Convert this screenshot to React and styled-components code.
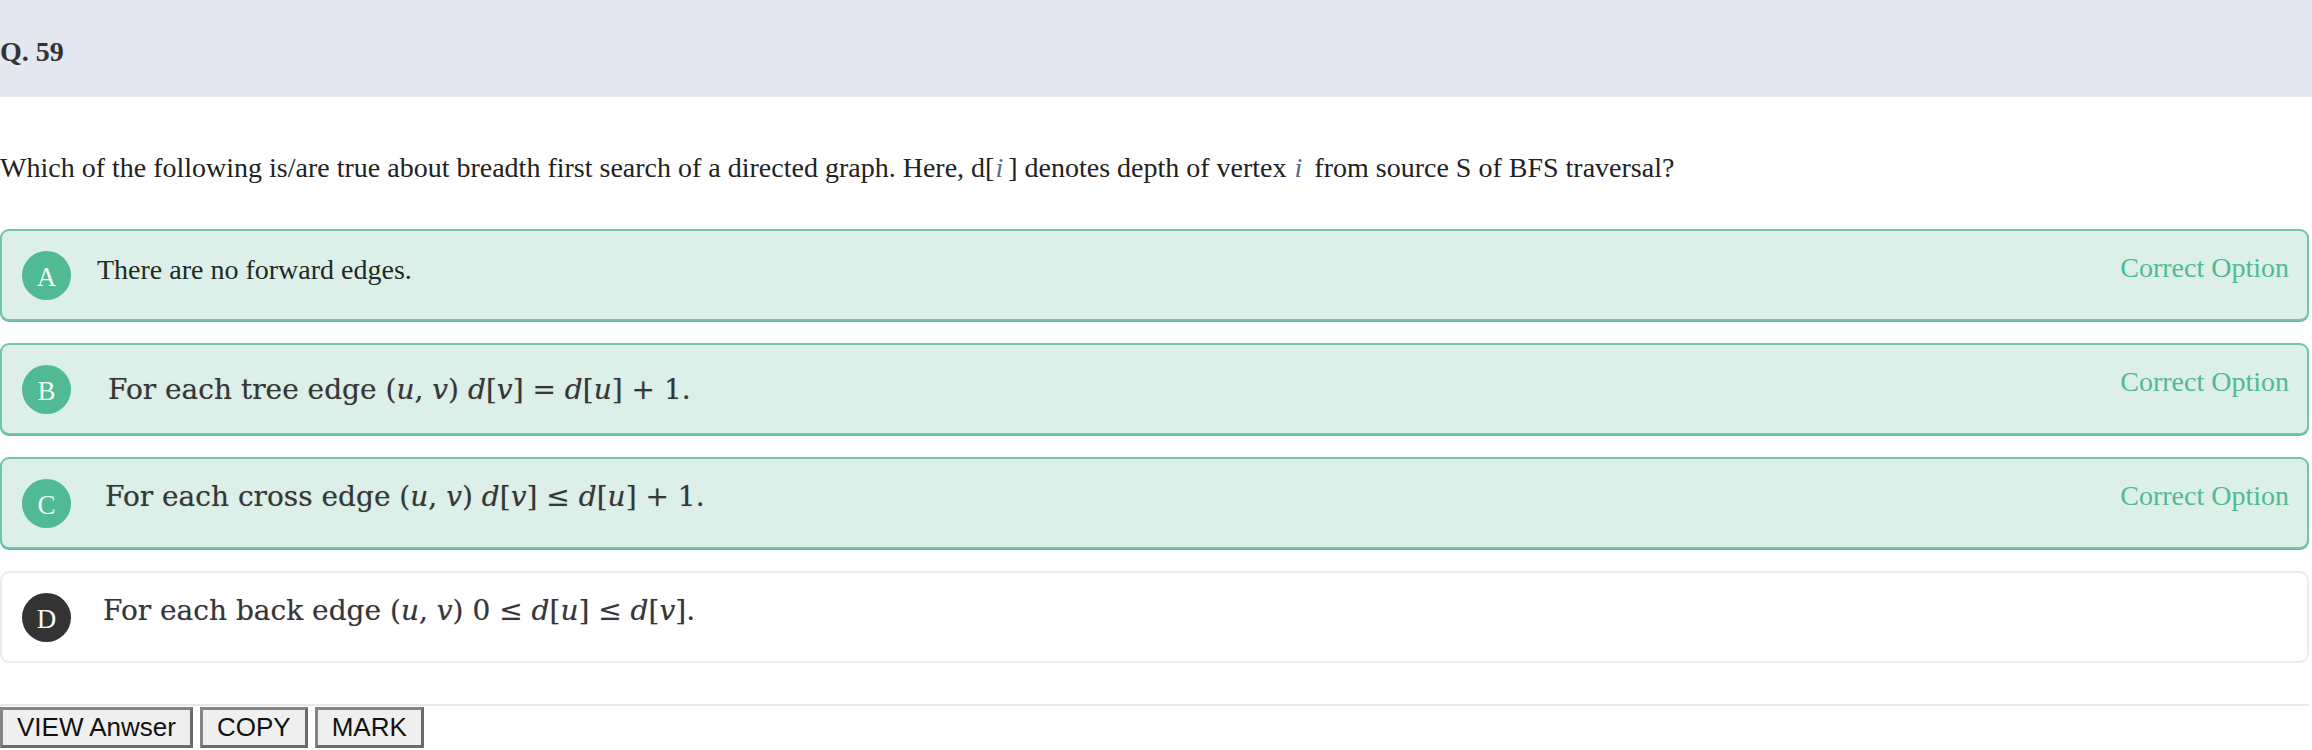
import styled, { createGlobalStyle } from "styled-components";

const GlobalStyle = createGlobalStyle`
  body {
    margin: 0;
    background: #fff;
    font-family: "Liberation Serif", "Times New Roman", serif;
    color: #222;
  }
`;

const Page = styled.div`
  width: 2312px;
`;

const Header = styled.div`
  height: 97px;
  background: #e4e7f0;
  display: flex;
  align-items: center;
  font-size: 28px;
  font-weight: bold;
  color: #333;
  padding-top: 6px;
  box-sizing: border-box;
`;

const Question = styled.p`
  margin: 54px 0 44px;
  font-size: 28px;
  line-height: 34px;
  color: #222;
`;

const Var = styled.i`
  font-family: "Liberation Serif", serif;
  color: #5a6a90;
  padding: 0 5px 0 1px;
`;

const OptionList = styled.div`
  display: flex;
  flex-direction: column;
  gap: 22px;
  margin-right: 3px;
`;

const OptionBox = styled.div`
  height: 92px;
  box-sizing: border-box;
  display: flex;
  align-items: center;
  padding: 0 18px 0 20px;
  border-radius: 9px;
  border: ${(p) => (p.$correct ? "2px solid #72c7a6" : "2px solid #ececec")};
  background: ${(p) => (p.$correct ? "#dcf0e9" : "#fff")};
  box-shadow: ${(p) => (p.$correct ? "0 1px 0 #5dbd98" : "none")};
`;

const Badge = styled.div`
  width: 49px;
  height: 49px;
  flex-shrink: 0;
  border-radius: 50%;
  background: ${(p) => (p.$dark ? "#333" : "#4fba93")};
  color: #f2faf6;
  font-size: 27px;
  display: flex;
  align-items: center;
  justify-content: center;
  padding-top: 4px;
  box-sizing: border-box;
`;

const OptionText = styled.div`
  flex: 1;
  margin-left: 26px;
  margin-bottom: 10px;
  font-size: 28px;
  color: #1e2a24;
`;

const MathText = styled.div`
  flex: 1;
  margin-left: ${(p) => p.$indent}px;
  margin-bottom: ${(p) => p.$lift}px;
  font-family: "DejaVu Serif", serif;
  font-size: 28px;
  color: #363636;
  text-shadow: 0 0 1px rgba(60, 60, 60, 0.4);

  i {
    font-style: italic;
  }
`;

const CorrectTag = styled.span`
  font-size: 28px;
  color: #4fba93;
  margin-bottom: 14px;
`;

const Divider = styled.div`
  margin-top: 41px;
  height: 2px;
  background: #e8e8e8;
  margin-right: 3px;
`;

const ButtonRow = styled.div`
  display: flex;
  gap: 7px;
  margin-top: 1px;
`;

const Button = styled.button`
  height: 41px;
  padding: 0 14px;
  font-family: "Liberation Sans", Arial, sans-serif;
  font-size: 26px;
  color: #111;
  background: #efefef;
  border: 3px solid;
  border-color: #858585 #6a6a6a #6a6a6a #858585;
  border-radius: 0;
`;

const options = [
  { key: "A", correct: true, text: "There are no forward edges." },
  {
    key: "B",
    correct: true,
    indent: 37,
    lift: 0,
    math: (
      <>
        For each tree edge (<i>u</i>, <i>v</i>) <i>d</i>[<i>v</i>] = <i>d</i>[<i>u</i>] + 1.
      </>
    ),
  },
  {
    key: "C",
    correct: true,
    indent: 34,
    lift: 14,
    math: (
      <>
        For each cross edge (<i>u</i>, <i>v</i>) <i>d</i>[<i>v</i>] ≤ <i>d</i>[<i>u</i>] + 1.
      </>
    ),
  },
  {
    key: "D",
    correct: false,
    indent: 32,
    lift: 14,
    math: (
      <>
        For each back edge (<i>u</i>, <i>v</i>) 0 ≤ <i>d</i>[<i>u</i>] ≤ <i>d</i>[<i>v</i>].
      </>
    ),
  },
];

const App = () => {
  return (
    <Page>
      <GlobalStyle />
      <Header>Q. 59</Header>
      <Question>
        Which of the following is/are true about breadth first search of a directed graph. Here, d[
        <Var>i</Var>] denotes depth of vertex <Var>i</Var> from source S of BFS traversal?
      </Question>
      <OptionList>
        {options.map((o) => (
          <OptionBox key={o.key} $correct={o.correct}>
            <Badge $dark={!o.correct}>{o.key}</Badge>
            {o.text ? (
              <OptionText>{o.text}</OptionText>
            ) : (
              <MathText $indent={o.indent} $lift={o.lift}>
                {o.math}
              </MathText>
            )}
            {o.correct && <CorrectTag>Correct Option</CorrectTag>}
          </OptionBox>
        ))}
      </OptionList>
      <Divider />
      <ButtonRow>
        <Button>VIEW Anwser</Button>
        <Button>COPY</Button>
        <Button>MARK</Button>
      </ButtonRow>
    </Page>
  );
};

export default App;
